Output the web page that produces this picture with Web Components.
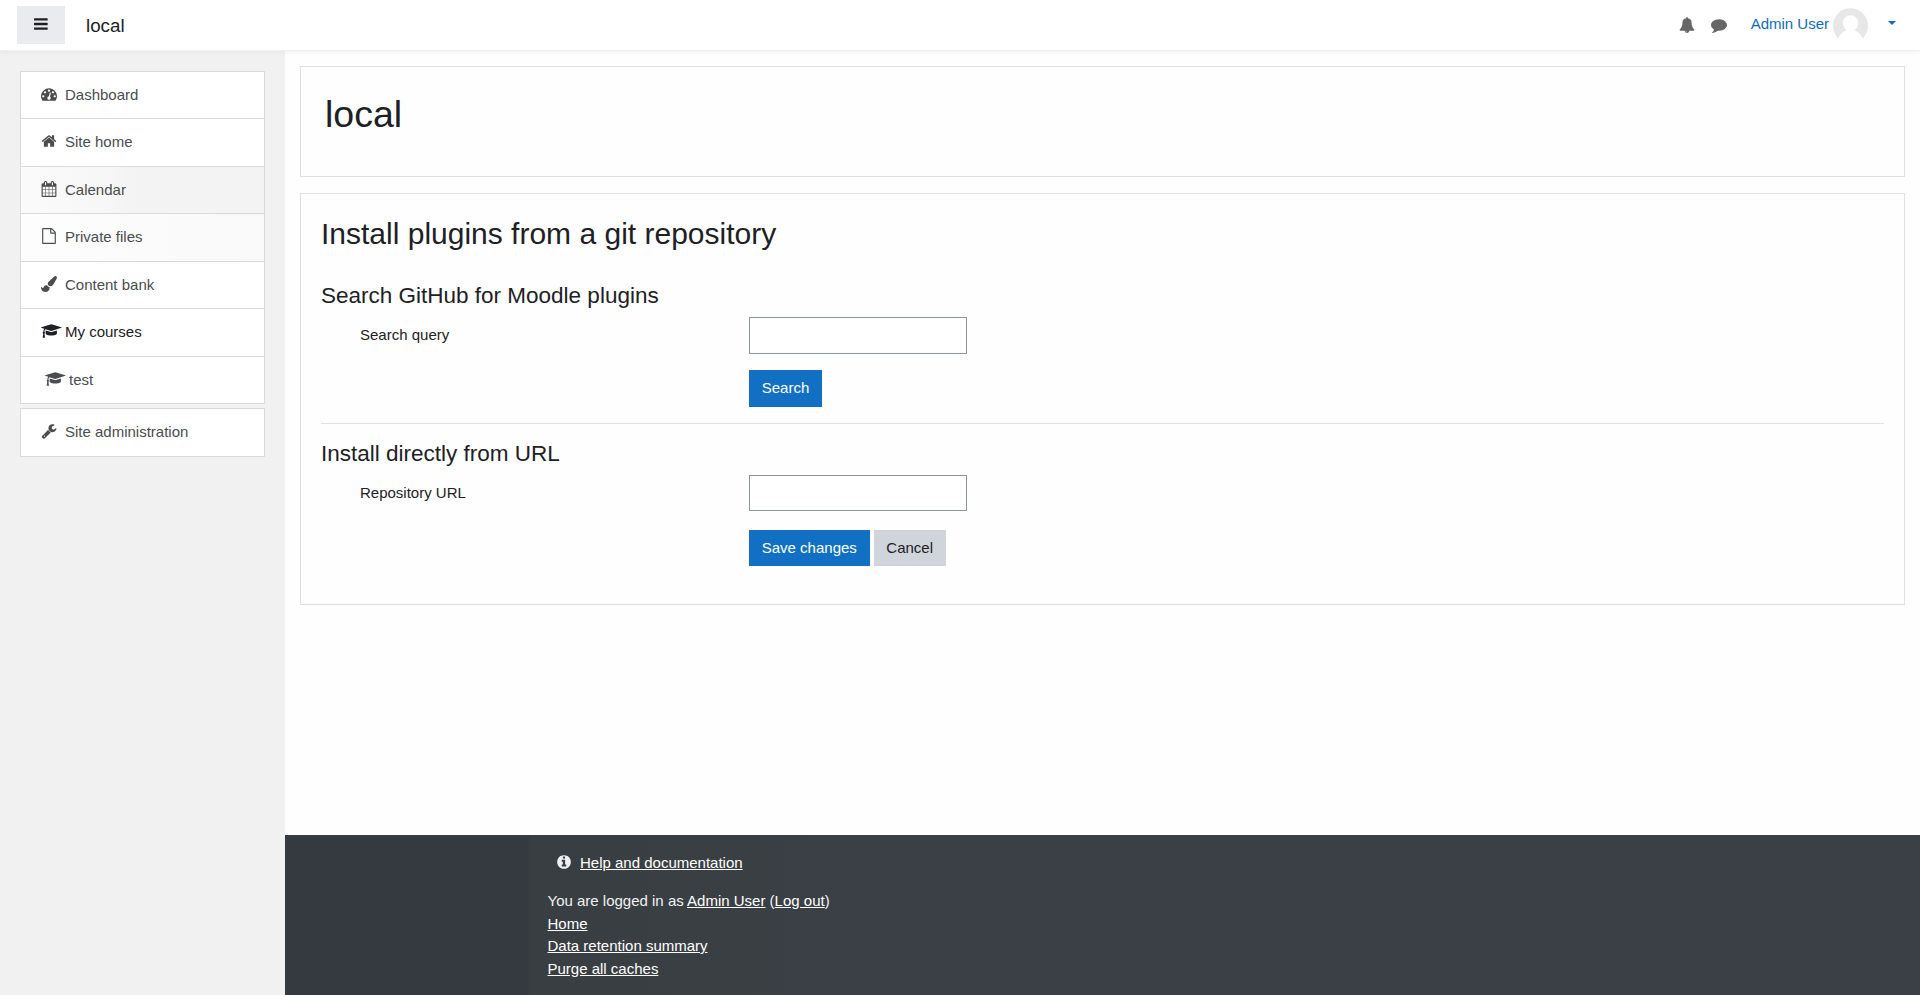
<!DOCTYPE html>
<html lang="en">
<head>
<meta charset="utf-8">
<title>local: Install plugins from a git repository</title>
<style>
html, body { margin: 0; height: 100%; }
body { font: 15px/22.5px "Liberation Sans", Arial, sans-serif; color: #1d2125; background: #fefefe; overflow: hidden; }
</style>
</head>
<body>
<moodle-page>
  <nav-bar slot="nav" site="local" user="Admin User"></nav-bar>
  <nav-drawer slot="drawer">
    <nav-group>
      <nav-item icon="tachometer">Dashboard</nav-item>
      <nav-item icon="home">Site home</nav-item>
      <nav-item icon="calendar" fading>Calendar</nav-item>
      <nav-item icon="file" fading="late">Private files</nav-item>
      <nav-item icon="brush">Content bank</nav-item>
      <nav-item icon="cap" strong>My courses</nav-item>
      <nav-item icon="cap" indent>test</nav-item>
    </nav-group>
    <nav-group>
      <nav-item icon="wrench">Site administration</nav-item>
    </nav-group>
  </nav-drawer>
  <content-card header><page-title>local</page-title></content-card>
  <content-card>
    <section-title level="2">Install plugins from a git repository</section-title>
    <section-title level="4">Search GitHub for Moodle plugins</section-title>
    <form-row label="Search query"></form-row>
    <form-actions>
      <push-button>Search</push-button>
    </form-actions>
    <rule-line></rule-line>
    <section-title level="4">Install directly from URL</section-title>
    <form-row label="Repository URL"></form-row>
    <form-actions wide>
      <push-button>Save changes</push-button>
      <push-button secondary>Cancel</push-button>
    </form-actions>
  </content-card>
  <page-footer slot="footer"></page-footer>
</moodle-page>
<script>
const ICONS = {
  bars: [1536, "M1536 1344v128q0 26-19 45t-45 19h-1408q-26 0-45-19t-19-45v-128q0-26 19-45t45-19h1408q26 0 45 19t19 45zm0-512v128q0 26-19 45t-45 19h-1408q-26 0-45-19t-19-45v-128q0-26 19-45t45-19h1408q26 0 45 19t19 45zm0-512v128q0 26-19 45t-45 19h-1408q-26 0-45-19t-19-45v-128q0-26 19-45t45-19h1408q26 0 45 19t19 45z"],
  tachometer: [1792, "M384 1152q0-53-37.5-90.5t-90.5-37.5-90.5 37.5-37.5 90.5 37.5 90.5 90.5 37.5 90.5-37.5 37.5-90.5zm192-448q0-53-37.5-90.5t-90.5-37.5-90.5 37.5-37.5 90.5 37.5 90.5 90.5 37.5 90.5-37.5 37.5-90.5zm428 481l101-382q6-26-7.5-48.5t-38.5-29.5-48 6.5-30 39.5l-101 382q-60 5-107 43.5t-63 98.5q-20 77 20 146t117 89 146-20 89-117q16-60-6-117t-72-91zm660-33q0-53-37.5-90.5t-90.5-37.5-90.5 37.5-37.5 90.5 37.5 90.5 90.5 37.5 90.5-37.5 37.5-90.5zm-640-640q0-53-37.5-90.5t-90.5-37.5-90.5 37.5-37.5 90.5 37.5 90.5 90.5 37.5 90.5-37.5 37.5-90.5zm448 192q0-53-37.5-90.5t-90.5-37.5-90.5 37.5-37.5 90.5 37.5 90.5 90.5 37.5 90.5-37.5 37.5-90.5zm320 448q0 261-141 483-19 29-54 29h-1402q-35 0-54-29-141-221-141-483 0-182 71-348t191-286 286-191 348-71 348 71 286 191 191 286 71 348z"],
  home: [1792, "M1472 992v480q0 26-19 45t-45 19h-384v-384h-256v384h-384q-26 0-45-19t-19-45v-480q0-1 .5-3t.5-3l575-474 575 474q1 2 1 6zm223-69l-62 74q-8 9-21 11h-3q-13 0-21-7l-692-577-692 577q-12 8-24 7-13-2-21-11l-62-74q-8-10-7-23.5t11-21.5l719-599q32-26 76-26t76 26l244 204v-195q0-14 9-23t23-9h192q14 0 23 9t9 23v408l219 182q10 8 11 21.5t-7 23.5z"],
  calendar: [1792, "M192 1664h288v-288h-288v288zm352 0h320v-288h-320v288zm-352-352h288v-320h-288v320zm352 0h320v-320h-320v320zm-352-384h288v-288h-288v288zm736 736h320v-288h-320v288zm-384-736h320v-288h-320v288zm768 736h288v-288h-288v288zm-384-352h320v-320h-320v320zm-352-864v-288q0-13-9.5-22.5t-22.5-9.5h-64q-13 0-22.5 9.5t-9.5 22.5v288q0 13 9.5 22.5t22.5 9.5h64q13 0 22.5-9.5t9.5-22.5zm736 864h288v-320h-288v320zm-384-384h320v-288h-320v288zm384 0h288v-288h-288v288zm32-480v-288q0-13-9.5-22.5t-22.5-9.5h-64q-13 0-22.5 9.5t-9.5 22.5v288q0 13 9.5 22.5t22.5 9.5h64q13 0 22.5-9.5t9.5-22.5zm384-64v1280q0 52-38 90t-90 38h-1408q-52 0-90-38t-38-90v-1280q0-52 38-90t90-38h128v-96q0-66 47-113t113-47h64q66 0 113 47t47 113v96h384v-96q0-66 47-113t113-47h64q66 0 113 47t47 113v96h128q52 0 90 38t38 90z"],
  file: [1792, "M1596 380q28 28 48 76t20 88v1152q0 40-28 68t-68 28h-1344q-40 0-68-28t-28-68v-1600q0-40 28-68t68-28h896q40 0 88 20t76 48zm-444-244v376h376q-10-29-22-41l-313-313q-12-12-41-22zm384 1528v-1024h-416q-40 0-68-28t-28-68v-416h-768v1536h1280z"],
  brush: [1792, "M1615 0q70 0 122.5 46.5t52.5 116.5q0 63-45 151-332 629-465 752-97 91-218 91-126 0-216.5-92.5t-90.5-219.5q0-128 92-212l638-579q59-54 130-54zm-909 1034q39 76 106.5 130t150.5 76l1 71q4 213-129.5 347t-348.5 134q-123 0-218-46.5t-152.5-127.5-86.5-183-29-220q7 5 41 30t62 44.5 59 36.5 46 17q41 0 55-37 25-66 57.5-112.5t69.5-76 88-47.5 103-25.5 125-10.5z"],
  cap: [2304, "M1774 836l18 316q4 69-82 128t-235 93.5-323 34.5-323-34.5-235-93.5-82-128l18-316 574 181q22 7 48 7t48-7zm530-324q0 23-22 31l-1120 352q-4 1-10 1t-10-1l-652-206q-43 34-71 111.5t-34 178.5q63 36 63 109 0 69-58 107l58 433q2 14-8 25-9 11-24 11h-192q-15 0-24-11-10-11-8-25l58-433q-58-38-58-107 0-73 65-111 11-207 98-330l-333-104q-22-8-22-31t22-31l1120-352q4-1 10-1t10 1l1120 352q22 8 22 31z"],
  wrench: [1792, "M448 1472q0-26-19-45t-45-19-45 19-19 45 19 45 45 19 45-19 19-45zm644-420l-682 682q-37 37-90 37-52 0-91-37l-106-108q-38-36-38-90 0-53 38-91l681-681q39 98 114.5 173.5t173.5 114.5zm634-435q0 39-23 106-47 134-164.5 217.5t-258.5 83.5q-185 0-316.5-131.5t-131.5-316.5 131.5-316.5 316.5-131.5q58 0 121.5 16.5t107.5 46.5q16 11 16 28t-16 28l-293 169v224l193 107q5-3 79-48.5t135.5-81 70.5-35.5q15 0 23.5 10t8.5 25z"],
  bell: [1792, "M912 1696q0-16-16-16-59 0-101.5-42.5t-42.5-101.5q0-16-16-16t-16 16q0 73 51.5 124.5t124.5 51.5q16 0 16-16zm816-288q0 52-38 90t-90 38h-448q0 106-75 181t-181 75-181-75-75-181h-448q-52 0-90-38t-38-90q50-42 91-88t85-119.5 74.5-158.5 50-206 19.5-260q0-152 117-282.5t307-158.5q-8-19-8-39 0-40 28-68t68-28 68 28 28 68q0 20-8 39 190 28 307 158.5t117 282.5q0 139 19.5 260t50 206 74.5 158.5 85 119.5 91 88z"],
  comment: [1792, "M1792 896q0 174-120 321.5t-326 233-450 85.5q-70 0-145-8-198 175-460 242-49 14-114 22-17 2-30.5-9t-17.5-29v-1q-3-4-.5-12t2-10 4.5-9.5l6-9 7-8.5 8-9q7-8 31-34.5t34.5-38 31-39.5 32.5-51 27-59 26-76q-157-89-247.5-220t-90.5-281q0-130 71-248.5t191-204.5 286-136.5 348-50.5q244 0 450 85.5t326 233 120 321.5z"],
  info: [1792, "M1152 1376v-160q0-14-9-23t-23-9h-96v-512q0-14-9-23t-23-9h-320q-14 0-23 9t-9 23v160q0 14 9 23t23 9h96v320h-96q-14 0-23 9t-9 23v160q0 14 9 23t23 9h448q14 0 23-9t9-23zm-128-896v-160q0-14-9-23t-23-9h-192q-14 0-23 9t-9 23v160q0 14 9 23t23 9h192q14 0 23-9t9-23zm640 416q0 209-103 385.5t-279.5 279.5-385.5 103-385.5-103-279.5-279.5-103-385.5 103-385.5 279.5-279.5 385.5-103 385.5 103 279.5 279.5 103 385.5z"]
};
function define(name, render) {
  customElements.define(name, class extends HTMLElement {
    constructor() { super(); this.attachShadow({ mode: "open" }); }
    connectedCallback() { this.shadowRoot.innerHTML = render(this); }
  });
}
define("fa-icon", el => {
  const [w, d] = ICONS[el.getAttribute("name")];
  return `<style>:host{display:block;width:16px;height:16px;flex:none}svg{display:block;height:16px;width:${w / 112}px;fill:currentColor}</style>
  <svg viewBox="0 0 ${w} 1792"><path d="${d}"/></svg>`;
});
define("moodle-page", () => `<style>
:host{display:grid;height:995px;grid-template:51px 1fr/285px 1fr}
.nav{grid-column:1/3;z-index:1}
.drawer{background:#f1f1f1}
.main{display:flex;flex-direction:column;min-width:0}
.cards{flex:1;display:flex;flex-direction:column;gap:16px;padding:15px 15px 0}
</style>
<div class="nav"><slot name="nav"></slot></div>
<div class="drawer"><slot name="drawer"></slot></div>
<div class="main"><div class="cards"><slot></slot></div><slot name="footer"></slot></div>`);
define("nav-bar", el => `<style>
:host{display:flex;align-items:center;height:51px;box-sizing:border-box;padding:0 24px 0 17px;background:#fff;border-bottom:1px solid #efefef;box-shadow:0 2px 4px rgba(0,0,0,.045)}
button{width:48px;height:38px;border:0;padding:0 0 2px;background:#e9ebef;display:flex;align-items:center;justify-content:center;color:#1d2125}
button fa-icon{width:13.7px}
.site{font-size:18.75px;margin:2px auto 0 21px}
.tools{display:flex;gap:16px;color:#666;margin-right:24px;padding-bottom:1px}
.user{color:#0f6cbf;margin-right:4px;padding-bottom:2px}
.face{width:35px;height:35px;margin-right:20px}
.caret{border:4.5px solid transparent;border-top-color:#0f6cbf;border-bottom:0;margin-bottom:4px}
</style>
<button aria-label="Side panel"><fa-icon name="bars"></fa-icon></button>
<div class="site">${el.getAttribute("site")}</div>
<div class="tools"><fa-icon name="bell"></fa-icon><fa-icon name="comment"></fa-icon></div>
<div class="user">${el.getAttribute("user")}</div>
<svg class="face" viewBox="0 0 35 35"><path fill="#e7e7e7" d="M5.2 30.2A17.5 17.5 0 1 1 29.8 30.2C28.2 26.5 25.5 23.5 21.5 22.2C24 20.5 25.2 18 25.2 15C25.2 10.3 22 7.2 17.5 7.2S9.8 10.3 9.8 15C9.8 18 11 20.5 13.5 22.2C9.5 23.5 6.8 26.5 5.2 30.2Z"/></svg>
<span class="caret"></span>`);
define("nav-drawer", () => `<style>:host{display:flex;flex-direction:column;gap:4px;padding:19.5px 20px 0;}</style><slot></slot>`);
define("nav-group", () => `<style>:host{display:block;border:1px solid #d9dadb;border-top:0;background:#fff}</style><slot></slot>`);
define("nav-item", el => `<style>
:host{display:flex;align-items:center;gap:8px;height:46.5px;padding-left:20px;border-top:1px solid #d9dadb;color:#4a4d50}
:host([fading]){background:linear-gradient(90deg,#fafafa,#f7f7f7 87px,#f3f3f3 110px,#f3f3f3)}
:host([fading=late]){background:linear-gradient(90deg,#fdfdfd,#f9f9f9)}
:host([strong]){color:#1d2125}
:host([indent]){padding-left:24px}
fa-icon{margin-bottom:2px}
</style><fa-icon name="${el.getAttribute("icon")}"></fa-icon><span><slot></slot></span>`);
define("content-card", el => `<style>
:host{display:block;border:1px solid #dfe0e1;background:#fefefe;box-sizing:border-box;height:412px;padding:20px}
:host([header]){height:111px;padding:25px 24px 0}
</style><slot></slot>`);
define("page-title", () => `<style>:host{display:block}h1{font-size:37.5px;line-height:45px;font-weight:400;margin:0}</style><h1><slot></slot></h1>`);
define("section-title", el => {
  const n = el.getAttribute("level");
  const s = n === "2" ? "font-size:30px;line-height:36px;margin:2px 0 30px" : "font-size:22.5px;line-height:27px;margin:0 0 8px";
  return `<style>:host{display:block}h${n}{font-weight:400;${s}}</style><h${n}><slot></slot></h${n}>`;
});
define("form-row", el => `<style>
:host{display:flex;align-items:center;height:36.5px;padding-left:39px}
label{width:389px}
input{box-sizing:border-box;width:218px;height:36.5px;border:1px solid #8f959e;background:#fff;padding:6px 12px;font:inherit}
</style><label for="f">${el.getAttribute("label")}</label><input id="f" type="text">`);
define("form-actions", () => `<style>:host{display:flex;gap:4px;padding:16.5px 0 0 428px}:host([wide]){padding-top:18.5px}</style><slot></slot>`);
define("push-button", () => `<style>
:host{display:block}
button{font:inherit;display:block;height:36.5px;border:0;padding:0 12.75px;color:#fff;background:#1170c4}
:host([secondary]) button{background:#d0d5dc;color:#1d2125}
</style><button><slot></slot></button>`);
define("rule-line", () => `<style>:host{display:block;border-top:1px solid #e2e2e2;margin:16px 0}</style>`);
define("page-footer", () => `<style>
:host{display:block;height:160px;box-sizing:border-box;padding:17px 0 0 262.5px;background:linear-gradient(90deg,#353a40 0 242px,#393e42 246px,#3b4046 600px);color:#f0f1f2}
a{color:#fff;text-decoration:underline}
.help{display:flex;align-items:center;gap:8px;padding-left:8.5px;margin-bottom:15.5px;height:22.5px}
.help fa-icon{margin-bottom:2px}
</style>
<div class="help"><fa-icon name="info"></fa-icon><a>Help and documentation</a></div>
<div>You are logged in as <a>Admin User</a> (<a>Log out</a>)</div>
<div><a>Home</a></div><div><a>Data retention summary</a></div><div><a>Purge all caches</a></div>`);
</script>
</body>
</html>
